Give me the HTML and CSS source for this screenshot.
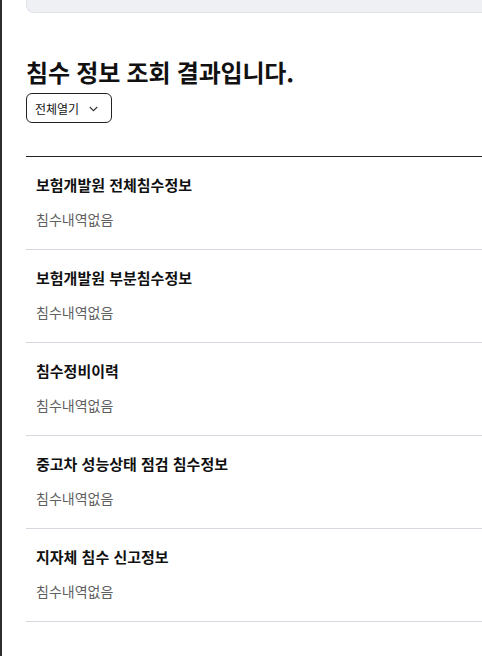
FILE: index.html
```html
<!DOCTYPE html>
<html lang="ko">
<head>
<meta charset="utf-8">
<link rel="stylesheet" href="styles.css">
</head>
<body>
<div class="page">
  <div class="top-box"></div>
  <h1 class="heading">침수 정보 조회 결과입니다.</h1>
  <button class="toggle-btn">전체열기
    <svg class="chev" width="9" height="6" viewBox="0 0 9 6"><path d="M0.8 1l3.7 3.7 3.7-3.7" fill="none" stroke="#333" stroke-width="1.1"/></svg>
  </button>
  <ul class="list">
    <li class="item"><div class="item-title">보험개발원 전체침수정보</div><div class="item-desc">침수내역없음</div></li>
    <li class="item"><div class="item-title">보험개발원 부분침수정보</div><div class="item-desc">침수내역없음</div></li>
    <li class="item"><div class="item-title">침수정비이력</div><div class="item-desc">침수내역없음</div></li>
    <li class="item"><div class="item-title">중고차 성능상태 점검 침수정보</div><div class="item-desc">침수내역없음</div></li>
    <li class="item"><div class="item-title">지자체 침수 신고정보</div><div class="item-desc">침수내역없음</div></li>
  </ul>
</div>
</body>
</html>
```
FILE: styles.css
```css
html, body {
  margin: 0;
  padding: 0;
  background: #fff;
  overflow: hidden;
}
body {
  width: 480px;
  height: 656px;
  border-left: 2px solid #2e2e2e;
  font-family: "Noto Sans CJK KR", "Noto Sans", sans-serif;
  color: #111;
}
.page {
  padding-left: 24px;
}
.top-box {
  height: 13px;
  background: #eef0f3;
  border-bottom: 1px solid #e0e3e7;
  border-left: 1px solid #e0e3e7;
  border-radius: 0 0 0 8px;
  box-sizing: border-box;
  margin-right: -10px;
}
.heading {
  margin: 44px 0 0;
  font-size: 24px;
  line-height: 30px;
  font-weight: 700;
  letter-spacing: -0.2px;
  color: #111;
}
.toggle-btn {
  margin-top: 6px;
  display: flex;
  align-items: center;
  gap: 10px;
  height: 30px;
  width: 86px;
  padding: 0 0 0 8px;
  box-sizing: border-box;
  border: 1px solid #222;
  border-radius: 6px;
  background: #fff;
  font-family: inherit;
  font-size: 12px;
  color: #111;
}
.chev { margin-top: 1px; }
.list {
  list-style: none;
  margin: 33px 0 0;
  padding: 0;
  border-top: 1px solid #222;
}
.item {
  padding: 18px 0 20px 10px;
  border-bottom: 1px solid #d8d8e0;
}
.item-title {
  font-size: 15px;
  line-height: 20px;
  font-weight: 700;
  color: #111;
}
.item-desc {
  margin-top: 14px;
  font-size: 14px;
  line-height: 20px;
  color: #5f5f5f;
}
```
